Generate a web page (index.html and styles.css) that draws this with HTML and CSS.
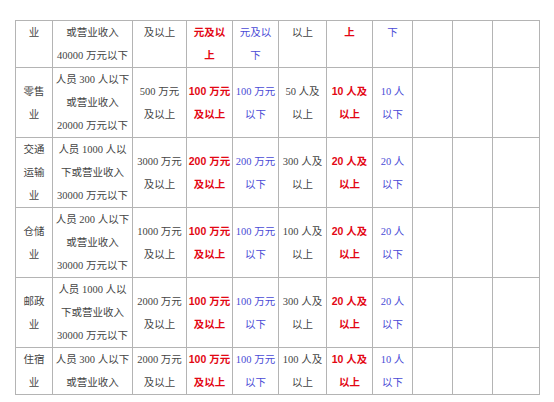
FILE: index.html
```html
<!DOCTYPE html>
<html lang="zh">
<head>
<meta charset="utf-8">
<link rel="stylesheet" href="styles.css">
</head>
<body>
<table class="grid">
  <colgroup>
    <col class="c1"><col class="c2"><col class="c3"><col class="c4"><col class="c5"><col class="c6"><col class="c7"><col class="c8"><col class="c9"><col class="c10"><col class="c11">
  </colgroup>
  <tr class="top">
    <td>业</td>
    <td>或营业收入<br>40000 万元以下</td>
    <td class="dk">及以上</td>
    <td class="red">元及以<br>上</td>
    <td class="blue dk">元及以<br>下</td>
    <td>以上</td>
    <td class="red">上</td>
    <td class="blue">下</td>
    <td class="dk"></td><td></td><td></td>
  </tr>
  <tr>
    <td>零售<br>业</td>
    <td>人员 300 人以下<br>或营业收入<br>20000 万元以下</td>
    <td class="dk">500 万元<br>及以上</td>
    <td class="red">100 万元<br>及以上</td>
    <td class="blue dk">100 万元<br>以下</td>
    <td>50 人及<br>以上</td>
    <td class="red">10 人及<br>以上</td>
    <td class="blue">10 人<br>以下</td>
    <td class="dk"></td><td></td><td></td>
  </tr>
  <tr>
    <td>交通<br>运输<br>业</td>
    <td>人员 1000 人以<br>下或营业收入<br>30000 万元以下</td>
    <td class="dk">3000 万元<br>及以上</td>
    <td class="red">200 万元<br>及以上</td>
    <td class="blue dk">200 万元<br>以下</td>
    <td>300 人及<br>以上</td>
    <td class="red">20 人及<br>以上</td>
    <td class="blue">20 人<br>以下</td>
    <td class="dk"></td><td></td><td></td>
  </tr>
  <tr>
    <td>仓储<br>业</td>
    <td>人员 200 人以下<br>或营业收入<br>30000 万元以下</td>
    <td class="dk">1000 万元<br>及以上</td>
    <td class="red">100 万元<br>及以上</td>
    <td class="blue dk">100 万元<br>以下</td>
    <td>100 人及<br>以上</td>
    <td class="red">20 人及<br>以上</td>
    <td class="blue">20 人<br>以下</td>
    <td class="dk"></td><td></td><td></td>
  </tr>
  <tr>
    <td>邮政<br>业</td>
    <td>人员 1000 人以<br>下或营业收入<br>30000 万元以下</td>
    <td class="dk">2000 万元<br>及以上</td>
    <td class="red">100 万元<br>及以上</td>
    <td class="blue dk">100 万元<br>以下</td>
    <td>300 人及<br>以上</td>
    <td class="red">20 人及<br>以上</td>
    <td class="blue">20 人<br>以下</td>
    <td class="dk"></td><td></td><td></td>
  </tr>
  <tr>
    <td>住宿<br>业</td>
    <td>人员 300 人以下<br>或营业收入</td>
    <td class="dk">2000 万元<br>及以上</td>
    <td class="red">100 万元<br>及以上</td>
    <td class="blue dk">100 万元<br>以下</td>
    <td>100 人及<br>以上</td>
    <td class="red">10 人及<br>以上</td>
    <td class="blue">10 人<br>以下</td>
    <td class="dk"></td><td></td><td></td>
  </tr>
</table>
</body>
</html>
```

FILE: styles.css
```css
html, body {
  margin: 0;
  padding: 0;
  background: #ffffff;
}

.grid {
  margin: 20px 0 0 15px;
  border-collapse: collapse;
  table-layout: fixed;
  width: 525px;
  font-family: "Liberation Serif", "Noto Sans CJK SC", serif;
  font-size: 10.5px;
  line-height: 23px;
  color: #444444;
}

.c1 { width: 37px; }
.c2 { width: 80px; }
.c3 { width: 54px; }
.c4 { width: 46px; }
.c5 { width: 46px; }
.c6 { width: 48px; }
.c7 { width: 46px; }
.c8 { width: 40px; }
.c9 { width: 40px; }
.c10 { width: 40px; }
.c11 { width: 47px; }

.grid td {
  border: 1px solid #b4b4b4;
  padding: 0;
  text-align: center;
  vertical-align: middle;
  white-space: nowrap;
  overflow: visible;
  height: 46px;
}

.grid tr.top td {
  vertical-align: top;
}

.grid td.dk {
  border-left-color: #8c8c8c;
}

.red {
  font-family: "Liberation Sans", "Noto Sans CJK SC", sans-serif;
  font-weight: bold;
  color: #e30613;
}

.blue {
  color: #4a4ad6;
}
```
